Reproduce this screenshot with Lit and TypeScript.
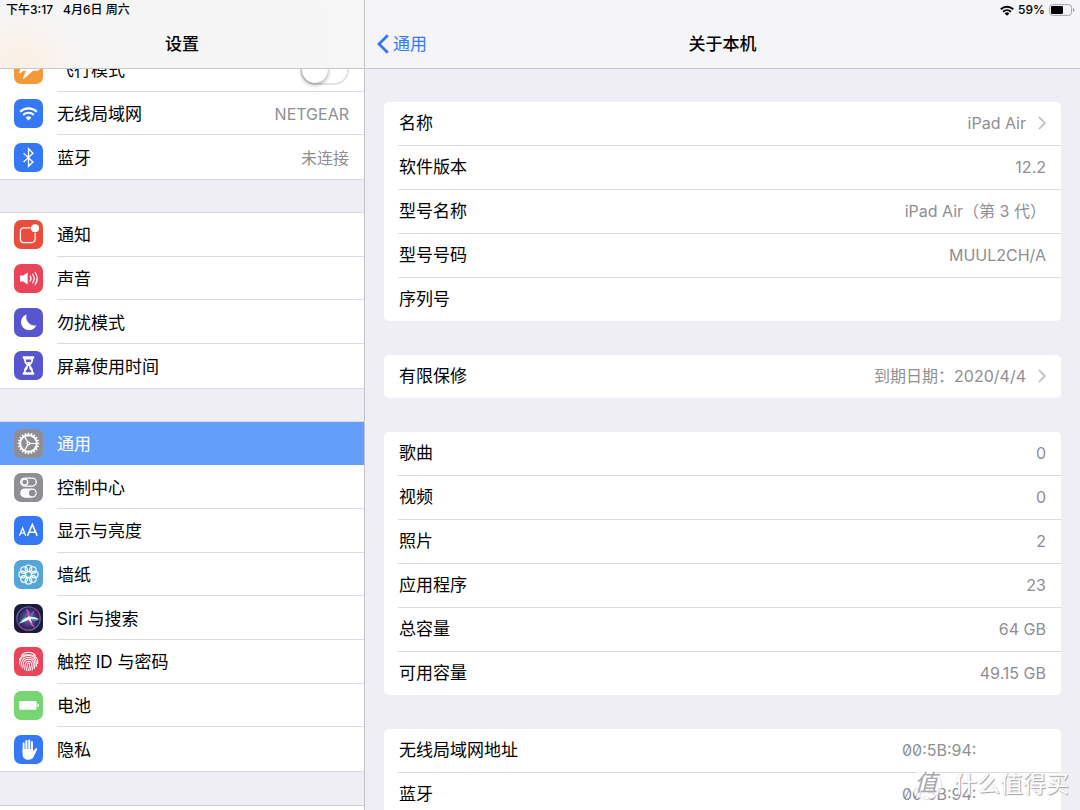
import { LitElement, html, css, svg, nothing, TemplateResult } from "lit";
import { customElement, property, state } from "lit/decorators.js";
import { classMap } from "lit/directives/class-map.js";

const petals = Array.from({ length: 8 }, (_, i) => (i * Math.PI) / 4);
const teeth = Array.from({ length: 20 }, (_, i) => i * 18);

const glyphs: Record<string, TemplateResult> = {
  airplane: svg`<path fill="#fff" d="M4.500 8h2l2.500 3.500h4.200L11 5h2.300l6 6.500h3c1.500 0 2.500.9 2.500 1.700s-1 1.900-2.500 1.900h-3.800L9.800 22.800H8.600l2.900-7.400H8.700L6.400 17.300H5l1-4.100z"/>`,
  wifi: svg`<g fill="none" stroke="#fff" stroke-width="2"><path d="M6 12.300a11.500 11.500 0 0 1 16 0"/><path d="M8.900 15.400a7.400 7.400 0 0 1 10.200 0"/></g><path fill="#fff" d="M11.200 18a4 4 0 0 1 5.600 0L14 20.800z"/>`,
  bluetooth: svg`<path fill="none" stroke="#fff" stroke-width="1.300" d="M9.300 9.800l9 8.500-4.300 4.200V5.500l4.300 4.300-9 8.500"/>`,
  notify: svg`<path fill="none" stroke="#fff" stroke-width="1.200" d="M16 7.600H9.200a3 3 0 0 0-3 3v8.200a3 3 0 0 0 3 3h8.200a3 3 0 0 0 3-3v-6.300"/><circle cx="20.300" cy="8" r="3.900" fill="#fff"/>`,
  sound: svg`<path fill="#fff" d="M5.800 11.200h3l4.400-3v11.600l-4.400-3h-3z"/><g fill="none" stroke="#fff" stroke-width="1.200" stroke-linecap="round"><path d="M15.600 11.600a4.200 4.200 0 0 1 0 4.800"/><path d="M18 9.900a7 7 0 0 1 0 8.200"/><path d="M20.400 8.200a10 10 0 0 1 0 11.600"/></g>`,
  moon: svg`<path fill="#fff" d="M12.300 6.300a7.700 7.700 0 1 0 9.300 10.400A8 8 0 0 1 12.300 6.300z"/>`,
  hourglass: svg`<path fill="#fff" d="M8.500 5h11v2.600h-1c0 3.400-1.200 4.700-2.800 6.400 1.600 1.700 2.800 3 2.800 6.400h1V23h-11v-2.600h1c0-3.400 1.200-4.700 2.800-6.400-1.600-1.700-2.800-3-2.800-6.400h-1z"/><path fill="#5856ce" d="M11.300 8.300h5.400c-.2 2.200-1 3-1.800 4H13.100c-.8-1-1.600-1.800-1.800-4zM13.500 14.500h1l.3 2.500 2 2.500v.9h-5.600v-.9l2-2.500z"/><path fill="#fff" d="M12.200 10.500h3.600l-1.400 2.500h-.8z"/>`,
  gear: svg`<g stroke="#fff" fill="none"><circle cx="14" cy="14" r="8" stroke-width="1.800"/><g stroke-width="1.500">${teeth.map((a) => svg`<path transform="rotate(${a} 14 14)" d="M14 5.800V3.600"/>`)}</g><path stroke-width="1.200" d="M14 14h8M14 14l-4-7M14 14l-4 7"/></g><circle cx="14" cy="14" r="1.900" fill="#fff"/><circle cx="14" cy="14" r=".8" fill="#8e8e93"/>`,
  toggles: svg`<rect x="6.500" y="5" width="15" height="7.600" rx="3.800" fill="none" stroke="#fff" stroke-width="1.300"/><circle cx="10.400" cy="8.800" r="2.900" fill="none" stroke="#fff" stroke-width="1.200"/><rect x="6" y="15" width="16" height="8.800" rx="4.400" fill="#fff"/><circle cx="17.600" cy="19.400" r="3.200" fill="#8e8e93"/>`,
  display: svg`<g fill="none" stroke="#fff"><path stroke-width="1.300" d="M5.300 19L8.300 11.700 11.300 19M6.300 16.500h4"/><path stroke-width="1.500" d="M13 19.200L17.700 8.200l4.700 11M14.500 15.600h6.400"/></g>`,
  flower: svg`<g fill="none" stroke="#fff" stroke-width="1.100">${petals.map((a) => svg`<circle cx=${14 + 6 * Math.cos(a)} cy=${14 + 6 * Math.sin(a)} r="3.200"/>`)}<circle cx="14" cy="14" r="3"/></g>`,
  siri: svg`<defs><linearGradient id="orb" x1="0" y1="0" x2="1" y2="1"><stop offset="0" stop-color="#4f8fb4"/><stop offset=".35" stop-color="#6a4a96"/><stop offset=".6" stop-color="#b23a90"/><stop offset="1" stop-color="#2e9aa6"/></linearGradient><radialGradient id="orbfill"><stop offset="0" stop-color="#8a6ab8"/><stop offset=".55" stop-color="#4a3c86"/><stop offset="1" stop-color="#211c45"/></radialGradient></defs><circle cx="14" cy="14" r="11.300" fill="url(#orbfill)" stroke="url(#orb)" stroke-width="1.200"/><path fill="#d35ab8" opacity=".8" d="M13.500 13L11.500 4.500c3 1 4.500 4.500 3.300 9zM15 13.500l5.500 9.500c-4-1.500-6.500-4.500-5.500-9.500z"/><path fill="#7f6bd8" opacity=".7" d="M14 13l5.500-7.500c.5 3.500-1.500 6.500-5 8z"/><path fill="#5fe0dc" opacity=".8" d="M14.500 12.500L4.500 20c2-5 5-7.800 10-7.500z"/><path fill="#49c9c4" opacity=".7" d="M15 13.500l9 .7c-2 3-6 3-9-.7z"/><path fill="#fff" d="M14 11.800l1.500.6c3.500-.2 6.500.6 8.500 2.700-3.500-.9-6-1-8-.7l1.500 4.600-3.300-3.800L6.500 18.500c1.700-2.300 4-4.500 6.500-5.500z"/>`,
  finger: svg`<g fill="none" stroke="#fff" stroke-width="1" stroke-linecap="round"><path d="M7.200 8a9.300 9.300 0 0 1 13.600 0"/><path d="M5.200 12.500C7 5.800 21 5.500 22.900 13v3"/><path d="M5.300 16.500c0-4 2-8.200 8.700-8.200s8.200 5 7.600 10.500"/><path d="M6.800 18.700c.6-2.700-.2-8.600 7.200-8.600s6.600 6.500 5.600 10.800"/><path d="M8.400 20.400c1-3-.8-8.500 5.600-8.500s4.800 6.300 3.500 10.500"/><path d="M10.200 21.700c1-3.300-.5-8 3.800-8s3 5.600 1.400 9.100"/><path d="M12 22.600c1-3 .3-7.100 2-7.100s1 4.500-.3 7.500"/></g>`,
  battery: svg`<rect x="5" y="9.700" width="16.800" height="8.400" rx="1" fill="#fff"/><path fill="#fff" d="M22.600 12.100c2.300.2 2.300 3.400 0 3.600z"/>`,
  hand: svg`<g stroke="#fff" stroke-width="1.900" stroke-linecap="round" fill="none"><path d="M9.300 8v8M12 5.800V15M14.700 5.200V15M17.300 6.800V15"/></g><path fill="#fff" d="M8.300 13.500h10v2.300l2.300-2.600c.9-.8 2.100-.2 1.700.8l-3.200 6.800c-1 2.200-2.700 3.200-5.100 3.200-3.400 0-5.700-2-5.700-5.600z"/>`,
};

interface Entry {
  icon: string;
  label: string;
  value?: string;
  toggle?: boolean;
}

const menu: Entry[][] = [
  [
    { icon: "airplane", label: "飞行模式", toggle: true },
    { icon: "wifi", label: "无线局域网", value: "NETGEAR" },
    { icon: "bluetooth", label: "蓝牙", value: "未连接" },
  ],
  [
    { icon: "notify", label: "通知" },
    { icon: "sound", label: "声音" },
    { icon: "moon", label: "勿扰模式" },
    { icon: "hourglass", label: "屏幕使用时间" },
  ],
  [
    { icon: "gear", label: "通用" },
    { icon: "toggles", label: "控制中心" },
    { icon: "display", label: "显示与亮度" },
    { icon: "flower", label: "墙纸" },
    { icon: "siri", label: "Siri 与搜索" },
    { icon: "finger", label: "触控 ID 与密码" },
    { icon: "battery", label: "电池" },
    { icon: "hand", label: "隐私" },
  ],
];

interface Fact {
  label: string;
  value: string;
  link?: boolean;
  address?: boolean;
}

const facts: Fact[][] = [
  [
    { label: "名称", value: "iPad Air", link: true },
    { label: "软件版本", value: "12.2" },
    { label: "型号名称", value: "iPad Air（第 3 代）" },
    { label: "型号号码", value: "MUUL2CH/A" },
    { label: "序列号", value: "" },
  ],
  [{ label: "有限保修", value: "到期日期：2020/4/4", link: true }],
  [
    { label: "歌曲", value: "0" },
    { label: "视频", value: "0" },
    { label: "照片", value: "2" },
    { label: "应用程序", value: "23" },
    { label: "总容量", value: "64 GB" },
    { label: "可用容量", value: "49.15 GB" },
  ],
  [
    { label: "无线局域网地址", value: "00:5B:94:", address: true },
    { label: "蓝牙", value: "00:5B:94:", address: true },
  ],
];

const shared = css`
  :host {
    display: block;
  }
  * {
    box-sizing: border-box;
  }
  ul {
    list-style: none;
    margin: 0;
    padding: 0;
  }
  button {
    border: 0;
    padding: 0;
    background: none;
    font: inherit;
    color: inherit;
    text-align: left;
  }
  .value {
    font-size: 16px;
    color: #8e8e93;
    white-space: nowrap;
  }
`;

@customElement("settings-icon")
class SettingsIcon extends LitElement {
  @property() name = "";

  static styles = css`
    :host {
      display: block;
      flex: none;
      width: 29px;
      height: 29px;
    }
    .tile {
      display: block;
      width: 100%;
      height: 100%;
      border-radius: 7px;
      background: #3478f6;
    }
    .airplane { background: #f19a37; }
    .notify { background: #eb4d3d; }
    .sound, .finger { background: #ea445a; }
    .moon, .hourglass { background: #5856ce; }
    .gear, .toggles { background: #8e8e93; }
    .flower { background: #54a6d8; }
    .siri { background: #1b1a38; }
    .battery { background: #77d572; }
  `;

  render() {
    return html`<svg class="tile ${this.name}" viewBox="0 0 28 28" aria-hidden="true">${glyphs[this.name]}</svg>`;
  }
}

@customElement("settings-menu")
class SettingsMenu extends LitElement {
  @state() selected = "gear";

  static styles = [
    shared,
    css`
      :host {
        display: flex;
        flex-direction: column;
      }
      .group {
        display: flex;
        flex-direction: column;
        flex-basis: 0;
        background: #fff;
        box-shadow: 0 -1px #dcdce0, 0 1px #dcdce0;
      }
      .gap {
        flex: 0 0 34px;
      }
      .next {
        flex: 0 0 5px;
        background: #fff;
        border-top: 1px solid #d0d0d4;
      }
      .item {
        display: flex;
        flex: 1 0 40px;
      }
      .row {
        display: flex;
        flex: 1;
        align-items: center;
        gap: 14px;
        padding-left: 14px;
      }
      .text {
        flex: 1;
        align-self: stretch;
        display: flex;
        align-items: center;
        justify-content: space-between;
        padding: 2px 15px 0 0;
        border-bottom: 1px solid #dcdce0;
      }
      .item:last-child .text {
        border-bottom: 0;
      }
      .selected {
        background: #639ff8;
        color: #fff;
      }
      .selected .text {
        border-color: #639ff8;
      }
      .switch {
        appearance: none;
        width: 49px;
        height: 30px;
        margin: 0;
        border: 2px solid #e3e3e5;
        border-radius: 15px;
        background: #fff;
      }
      .switch::before {
        content: "";
        display: block;
        width: 26px;
        height: 26px;
        border-radius: 50%;
        background: #fff;
        box-shadow: 0 2px 4px rgba(0, 0, 0, 0.3), 0 0 1px rgba(0, 0, 0, 0.4);
      }
      .switch:checked {
        background: #4cd964;
        border-color: #4cd964;
      }
      .switch:checked::before {
        margin-left: auto;
      }
    `,
  ];

  private item(e: Entry) {
    if (e.toggle) {
      return html`<li class="item">
        <div class="row">
          <settings-icon name=${e.icon}></settings-icon>
          <span class="text">
            <label for=${e.icon}>${e.label}</label>
            <input class="switch" id=${e.icon} type="checkbox" role="switch" />
          </span>
        </div>
      </li>`;
    }
    const on = this.selected === e.icon;
    return html`<li class="item">
      <button class=${classMap({ row: true, selected: on })} @click=${() => (this.selected = e.icon)}>
        <settings-icon name=${e.icon}></settings-icon>
        <span class="text">
          <span>${e.label}</span>
          ${e.value ? html`<span class="value">${e.value}</span>` : nothing}
        </span>
      </button>
    </li>`;
  }

  render() {
    return html`${menu.map(
        (g) => html`<ul class="group" style="flex-grow:${g.length}">${g.map((e) => this.item(e))}</ul>
          <div class="gap"></div>`
      )}
      <div class="next"></div>`;
  }
}

@customElement("about-list")
class AboutList extends LitElement {
  static styles = [
    shared,
    css`
      :host {
        display: flex;
        flex-direction: column;
        gap: 34px;
        padding: 33px 19px;
      }
      .card {
        background: #fff;
        border-radius: 5px;
        padding-left: 14px;
      }
      .row {
        display: flex;
        width: 100%;
        height: 44px;
        align-items: center;
        padding: 0 15px 2px 0;
        border-bottom: 1px solid #dcdce0;
      }
      .item:last-child .row {
        height: 43px;
        border-bottom: 0;
      }
      .label {
        flex: 1;
        padding-left: 1px;
      }
      .address {
        width: 144px;
        font-feature-settings: "zero";
      }
      .chevron {
        width: 8px;
        height: 14px;
        margin-left: 12px;
      }
    `,
  ];

  private item(f: Fact) {
    const body = html`<span class="label">${f.label}</span>
      <span class=${classMap({ value: true, address: !!f.address })}>${f.value}</span>`;
    return html`<li class="item">
      ${f.link
        ? html`<button class="row">
            ${body}<svg class="chevron" viewBox="0 0 8 14" aria-hidden="true">
              <path d="M1 1l6 6-6 6" fill="none" stroke="#c4c4c8" stroke-width="1.800" />
            </svg>
          </button>`
        : html`<div class="row">${body}</div>`}
    </li>`;
  }

  render() {
    return facts.map((g) => html`<ul class="card">${g.map((f) => this.item(f))}</ul>`);
  }
}

@customElement("app-root")
class AppRoot extends LitElement {
  static styles = [
    shared,
    css`
      :host {
        display: flex;
        height: 100vh;
        overflow: hidden;
        position: relative;
        background: #efeef4;
        color: #000;
        font: 17px/22px Inter, "Noto Sans CJK SC", sans-serif;
      }
      .side {
        flex: 0 0 365px;
        display: flex;
        flex-direction: column;
        border-right: 1px solid #c3c3c7;
      }
      .main {
        flex: 1;
        min-width: 0;
      }
      .bar {
        position: relative;
        z-index: 1;
        background: #f5f5f7;
        border-bottom: 1px solid #c9c9cc;
      }
      .side .bar {
        background: radial-gradient(circle at 20px 68px, #fbf0e2, #f6f5f5 60px, #f6f6f7);
      }
      .status {
        display: flex;
        align-items: center;
        gap: 10px;
        height: 20px;
        padding: 0 6px;
        font-size: 12px;
        line-height: 20px;
        font-weight: 500;
      }
      .right {
        justify-content: flex-end;
        gap: 4px;
        padding-right: 5px;
      }
      .signal {
        width: 14px;
        height: 11px;
      }
      .cell {
        width: 26px;
        height: 12px;
      }
      .nav {
        display: grid;
        grid-template-columns: 1fr auto 1fr;
        align-items: center;
        height: 48px;
        padding: 0 12px;
      }
      .title {
        grid-column: 2;
        margin: 0;
        font-size: 17px;
        font-weight: 500;
      }
      .back {
        display: flex;
        align-items: center;
        gap: 4px;
        color: #3478f6;
      }
      .arrow {
        width: 12px;
        height: 20px;
      }
      settings-menu {
        flex: 1;
        margin-top: -21px;
      }
      .mark {
        position: absolute;
        right: 11px;
        bottom: 8px;
        display: flex;
        align-items: center;
        gap: 13px;
        font-size: 23px;
        line-height: 36px;
        color: #fff;
        text-shadow: 1px 1px 1px #a0a0a4, 0 0 1px #c8c8cc;
      }
      .seal {
        width: 30px;
        height: 30px;
        border-radius: 50%;
        background: rgba(255, 255, 255, 0.75);
        box-shadow: 1px 1px 1px #dcdce0;
        color: #a6a6aa;
        text-align: center;
        line-height: 28px;
        font-style: italic;
        text-shadow: none;
      }
    `,
  ];

  render() {
    return html`
      <nav class="side">
        <header class="bar">
          <div class="status"><span>下午3:17</span><span>4月6日 周六</span></div>
          <div class="nav"><h1 class="title">设置</h1></div>
        </header>
        <settings-menu></settings-menu>
      </nav>
      <main class="main">
        <header class="bar">
          <div class="status right">
            <svg class="signal" viewBox="0 0 14 11" aria-hidden="true">
              <g fill="none" stroke="#000" stroke-width="1.900">
                <path d="M.8 4.300a9 9 0 0 1 12.400 0" />
                <path d="M3.100 6.700a5.700 5.700 0 0 1 7.800 0" />
              </g>
              <path d="M4.700 8.400a3.400 3.400 0 0 1 4.600 0L7 10.700z" />
            </svg>
            <span>59%</span>
            <svg class="cell" viewBox="0 0 26 12" aria-hidden="true">
              <rect x=".6" y=".6" width="22" height="10.800" rx="3" fill="none" stroke="#a4a4a8" />
              <rect x="2" y="2" width="12" height="8" rx="1.300" />
              <path fill="#a4a4a8" d="M24 4c2 .6 2 3.400 0 4z" />
            </svg>
          </div>
          <div class="nav">
            <button class="back">
              <svg class="arrow" viewBox="0 0 12 20" aria-hidden="true">
                <path d="M10.800 1.200L2 10l8.800 8.800" fill="none" stroke="#3478f6" stroke-width="2.800" />
              </svg>
              通用
            </button>
            <h2 class="title">关于本机</h2>
          </div>
        </header>
        <about-list></about-list>
      </main>
      <div class="mark"><span class="seal">值</span><span>什么值得买</span></div>
    `;
  }
}
